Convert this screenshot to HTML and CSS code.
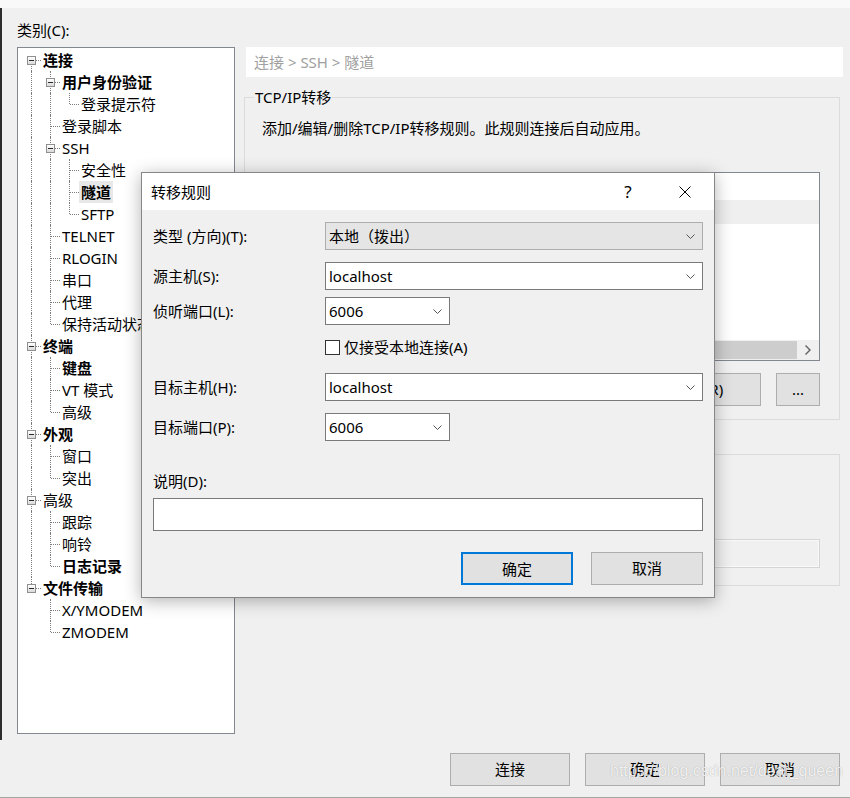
FILE: index.html
```html
<!DOCTYPE html>
<html lang="zh-CN">
<head>
    <meta charset="UTF-8">
    <meta name="viewport" content="width=device-width, initial-scale=1.0">
    <title>会话选项 - 隧道</title>
    <link rel="stylesheet" href="styles.css">
</head>
<body>
    <div class="topbar"></div>

    <div class="window">
        <div class="cat-label">类别(C):</div>

        <div class="main">
            <!-- 类别树 -->
            <div class="tree">
                <div class="row"><span class="g x dn"><i class="box"></i></span><span class="txt b">连接</span></div>
                <div class="row"><span class="g v"></span><span class="g x up dn"><i class="box"></i></span><span class="txt b">用户身份验证</span></div>
                <div class="row"><span class="g v"></span><span class="g v"></span><span class="g l"></span><span class="txt">登录提示符</span></div>
                <div class="row"><span class="g v"></span><span class="g t"></span><span class="txt">登录脚本</span></div>
                <div class="row"><span class="g v"></span><span class="g x up dn"><i class="box"></i></span><span class="txt">SSH</span></div>
                <div class="row"><span class="g v"></span><span class="g v"></span><span class="g t"></span><span class="txt">安全性</span></div>
                <div class="row"><span class="g v"></span><span class="g v"></span><span class="g t"></span><span class="txt b sel">隧道</span></div>
                <div class="row"><span class="g v"></span><span class="g v"></span><span class="g l"></span><span class="txt">SFTP</span></div>
                <div class="row"><span class="g v"></span><span class="g t"></span><span class="txt">TELNET</span></div>
                <div class="row"><span class="g v"></span><span class="g t"></span><span class="txt">RLOGIN</span></div>
                <div class="row"><span class="g v"></span><span class="g t"></span><span class="txt">串口</span></div>
                <div class="row"><span class="g v"></span><span class="g t"></span><span class="txt">代理</span></div>
                <div class="row"><span class="g v"></span><span class="g l"></span><span class="txt">保持活动状态</span></div>
                <div class="row"><span class="g x up dn"><i class="box"></i></span><span class="txt b">终端</span></div>
                <div class="row"><span class="g v"></span><span class="g t"></span><span class="txt b">键盘</span></div>
                <div class="row"><span class="g v"></span><span class="g t"></span><span class="txt">VT 模式</span></div>
                <div class="row"><span class="g v"></span><span class="g l"></span><span class="txt">高级</span></div>
                <div class="row"><span class="g x up dn"><i class="box"></i></span><span class="txt b">外观</span></div>
                <div class="row"><span class="g v"></span><span class="g t"></span><span class="txt">窗口</span></div>
                <div class="row"><span class="g v"></span><span class="g l"></span><span class="txt">突出</span></div>
                <div class="row"><span class="g x up dn"><i class="box"></i></span><span class="txt">高级</span></div>
                <div class="row"><span class="g v"></span><span class="g t"></span><span class="txt">跟踪</span></div>
                <div class="row"><span class="g v"></span><span class="g t"></span><span class="txt">响铃</span></div>
                <div class="row"><span class="g v"></span><span class="g l"></span><span class="txt b">日志记录</span></div>
                <div class="row"><span class="g x up"><i class="box"></i></span><span class="txt b">文件传输</span></div>
                <div class="row"><span class="g"></span><span class="g t"></span><span class="txt">X/YMODEM</span></div>
                <div class="row"><span class="g"></span><span class="g l"></span><span class="txt">ZMODEM</span></div>
            </div>

            <!-- 右侧设置页 -->
            <div class="panel">
                <div class="crumb">连接 &gt; SSH &gt; 隧道</div>

                <fieldset class="group">
                    <legend>TCP/IP转移</legend>
                    <div class="desc">添加/编辑/删除TCP/IP转移规则。此规则连接后自动应用。</div>
                    <div class="list">
                        <div class="list-row"></div>
                        <div class="hscroll">
                            <div class="thumb"></div>
                            <div class="arrow">
                                <svg width="6" height="10" viewBox="0 0 6 10"><polyline points="0.5,0.5 5,5 0.5,9.5" fill="none" stroke="#606060" stroke-width="1.4"/></svg>
                            </div>
                        </div>
                    </div>
                    <div class="list-btns">
                        <button class="btn wide">添加(A)...</button>
                        <button class="btn wide">编辑(E)...</button>
                        <button class="btn wide">删除(R)</button>
                        <button class="btn small">...</button>
                    </div>
                </fieldset>

                <div class="group2">
                    <div class="field-off"></div>
                </div>
            </div>
        </div>

        <div class="footer">
            <button class="btn">连接</button>
            <button class="btn">确定</button>
            <button class="btn">取消</button>
        </div>
    </div>
    <div class="bottom-line"></div>

    <!-- 转移规则 对话框 -->
    <div class="dialog">
        <div class="dlg-title">
            <span class="dlg-caption">转移规则</span>
            <span class="dlg-help">?</span>
            <span class="dlg-close">
                <svg width="12" height="12" viewBox="0 0 12 12"><path d="M0.5 0.5 L11.5 11.5 M11.5 0.5 L0.5 11.5" stroke="#000" stroke-width="1"/></svg>
            </span>
        </div>
        <div class="dlg-body">
            <div class="frow r-type">
                <span class="flabel">类型 (方向)(T):</span>
                <div class="combo wide off"><span>本地（拨出）</span><svg width="9" height="5" viewBox="0 0 9 5"><polyline points="0.5,0.5 4.5,4.5 8.5,0.5" fill="none" stroke="#555"/></svg></div>
            </div>
            <div class="frow r-src">
                <span class="flabel">源主机(S):</span>
                <div class="combo wide"><span>localhost</span><svg width="9" height="5" viewBox="0 0 9 5"><polyline points="0.5,0.5 4.5,4.5 8.5,0.5" fill="none" stroke="#555"/></svg></div>
            </div>
            <div class="frow r-port">
                <span class="flabel">侦听端口(L):</span>
                <div class="combo short"><span>6006</span><svg width="9" height="5" viewBox="0 0 9 5"><polyline points="0.5,0.5 4.5,4.5 8.5,0.5" fill="none" stroke="#555"/></svg></div>
            </div>
            <div class="frow r-check">
                <span class="flabel"></span>
                <span class="chk"></span>
                <span>仅接受本地连接(A)</span>
            </div>
            <div class="frow r-dst">
                <span class="flabel">目标主机(H):</span>
                <div class="combo wide"><span>localhost</span><svg width="9" height="5" viewBox="0 0 9 5"><polyline points="0.5,0.5 4.5,4.5 8.5,0.5" fill="none" stroke="#555"/></svg></div>
            </div>
            <div class="frow r-dport">
                <span class="flabel">目标端口(P):</span>
                <div class="combo short"><span>6006</span><svg width="9" height="5" viewBox="0 0 9 5"><polyline points="0.5,0.5 4.5,4.5 8.5,0.5" fill="none" stroke="#555"/></svg></div>
            </div>
            <div class="note-label">说明(D):</div>
            <div class="dlg-input"></div>
            <div class="dlg-btns">
                <button class="btn default">确定</button>
                <button class="btn">取消</button>
            </div>
        </div>
    </div>

    <div class="watermark">https://blog.csdn.net/dear_queen</div>
</body>
</html>
```

FILE: styles.css
```css
* {
    box-sizing: border-box;
}
html, body {
    margin: 0;
}
body {
    position: relative;
    width: 850px;
    height: 798px;
    overflow: hidden;
    background: linear-gradient(to right, #2e2e2e 0 2px, transparent 2px) no-repeat 0 0 / 2px 740px, #f0f0f0;
    font-family: "Noto Sans", "Noto Sans CJK SC", sans-serif;
    font-size: 15px;
    color: #000;
}
.topbar {
    height: 8px;
    background: #f9f9f9;
}
.window {
    padding: 12px 7px 0 17px;
}
.cat-label {
    height: 20px;
    line-height: 20px;
    margin-bottom: 7px;
}
.main {
    display: flex;
    gap: 11px;
}

/* tree */
.tree {
    flex: none;
    width: 218px;
    height: 687px;
    border: 1px solid #828790;
    background: #fff;
    padding: 1px 0 0 4px;
    overflow: hidden;
}
.row {
    display: flex;
    height: 22px;
    line-height: 22px;
    white-space: nowrap;
}
.g {
    position: relative;
    flex: none;
    width: 19px;
}
.g::before, .g::after {
    position: absolute;
}
.v::before, .t::before, .l::before, .x.up::before, .x.dn::before {
    content: '';
    left: 9px;
    top: 0;
    bottom: 0;
    border-left: 1px dotted #7d7d7d;
}
.l::before, .x.up::before {
    bottom: 11px;
}
.x.dn::before {
    top: 11px;
}
.x.up.dn::before {
    top: 0;
    bottom: 0;
}
.t::after, .l::after, .x::after {
    content: '';
    left: 10px;
    right: 0;
    top: 11px;
    border-top: 1px dotted #7d7d7d;
}
.box {
    position: absolute;
    z-index: 1;
    left: 5px;
    top: 7px;
    width: 9px;
    height: 9px;
    border: 1px solid #8e8f8f;
    background: linear-gradient(#fff, #dadada);
}
.box::before {
    content: '';
    position: absolute;
    left: 1px;
    top: 3px;
    width: 5px;
    height: 1px;
    background: #2b2b2b;
}
.txt {
    padding: 0 2px;
}
.b {
    font-weight: 700;
}
.sel {
    background: #e8e8e8;
}

/* right panel */
.panel {
    flex: 1;
    min-width: 0;
}
.crumb {
    height: 30px;
    line-height: 30px;
    padding-left: 8px;
    background: #fff;
    color: #a0a0a0;
}
.group {
    min-width: 0;
    margin: 10px 3px 0 -2px;
    padding: 0 19px 13px 8px;
    border: 1px solid #dcdcdc;
}
.group legend {
    margin-left: 1px;
    padding: 0 1px;
    line-height: 20px;
}
.desc {
    margin-top: 11px;
    padding-left: 9px;
    line-height: 20px;
}
.list {
    display: flex;
    flex-direction: column;
    height: 189px;
    margin-top: 34px;
    border: 1px solid #828790;
    background: #fff;
}
.list-row {
    height: 24px;
    margin-top: 27px;
    background: #efefef;
}
.hscroll {
    display: flex;
    height: 20px;
    margin-top: auto;
    background: #f0f0f0;
}
.thumb {
    flex: 1;
    margin: 1px 0;
    background: #cdcdcd;
}
.arrow {
    display: flex;
    align-items: center;
    justify-content: center;
    width: 22px;
}
.btn {
    height: 33px;
    padding: 0;
    border: 1px solid #adadad;
    background: #e1e1e1;
    font: inherit;
    line-height: 31px;
    color: #000;
}
.list-btns {
    display: flex;
    justify-content: flex-end;
    gap: 15px;
    margin-top: 12px;
}
.list-btns .wide {
    width: 124px;
}
.list-btns .small {
    width: 44px;
}
.group2 {
    height: 132px;
    margin: 34px 3px 0 -2px;
    padding: 84px 19px 0 8px;
    border: 1px solid #dcdcdc;
}
.field-off {
    height: 29px;
    border: 1px solid #d5d5d5;
    background: #f0f0f0;
    box-shadow: inset 0 0 0 1px #f8f8f8;
}
.footer {
    display: flex;
    justify-content: flex-end;
    gap: 15px;
    margin-top: 19px;
    padding-right: 3px;
}
.footer .btn {
    width: 120px;
}
.bottom-line {
    height: 1px;
    margin-top: 11px;
    background: #a5a5a5;
}

/* dialog */
.dialog {
    position: absolute;
    left: 141px;
    top: 172px;
    width: 574px;
    height: 426px;
    border: 1px solid #868686;
    background: #f0f0f0;
    box-shadow: 0 3px 16px rgba(0, 0, 0, 0.3);
}
.dlg-title {
    display: flex;
    align-items: center;
    height: 37px;
    padding-left: 9px;
    background: #fff;
}
.dlg-caption {
    flex: 1;
}
.dlg-help {
    width: 20px;
    font-size: 17px;
    text-align: center;
}
.dlg-close {
    display: flex;
    justify-content: center;
    width: 24px;
    margin: 0 17px 0 35px;
}
.dlg-body {
    padding: 0 11px;
}
.frow {
    display: flex;
    align-items: center;
    height: 28px;
    line-height: 20px;
}
.flabel {
    flex: none;
    width: 172px;
}
.r-type { margin-top: 12px; }
.r-src { margin-top: 12px; }
.r-port { margin-top: 7px; }
.r-check { margin-top: 11px; height: 22px; }
.r-dst { margin-top: 15px; }
.r-dport { margin-top: 12px; }
.combo {
    display: flex;
    align-items: center;
    height: 28px;
    padding: 0 7px 0 3px;
    border: 1px solid #7a7a7a;
    background: #fff;
    line-height: 26px;
}
.combo span {
    flex: 1;
}
.combo.wide {
    flex: 1;
}
.combo.short {
    width: 125px;
}
.combo.off {
    border-color: #adadad;
    background: #e5e5e5;
}
.chk {
    width: 15px;
    height: 15px;
    margin-right: 4px;
    border: 1px solid #333;
    background: #fff;
}
.note-label {
    margin-top: 30px;
    line-height: 20px;
}
.dlg-input {
    height: 33px;
    margin-top: 7px;
    border: 1px solid #7a7a7a;
    background: #fff;
}
.dlg-btns {
    display: flex;
    justify-content: flex-end;
    gap: 18px;
    margin-top: 21px;
}
.dlg-btns .btn {
    width: 112px;
}
.btn.default {
    border: 2px solid #0078d7;
}

.watermark {
    position: absolute;
    left: 610px;
    top: 759px;
    font-family: "Liberation Sans", sans-serif;
    font-size: 16px;
    line-height: 24px;
    white-space: nowrap;
    color: rgba(255, 255, 255, 0.85);
    text-shadow: 0 0 1px rgba(0, 0, 0, 0.3);
}
```
